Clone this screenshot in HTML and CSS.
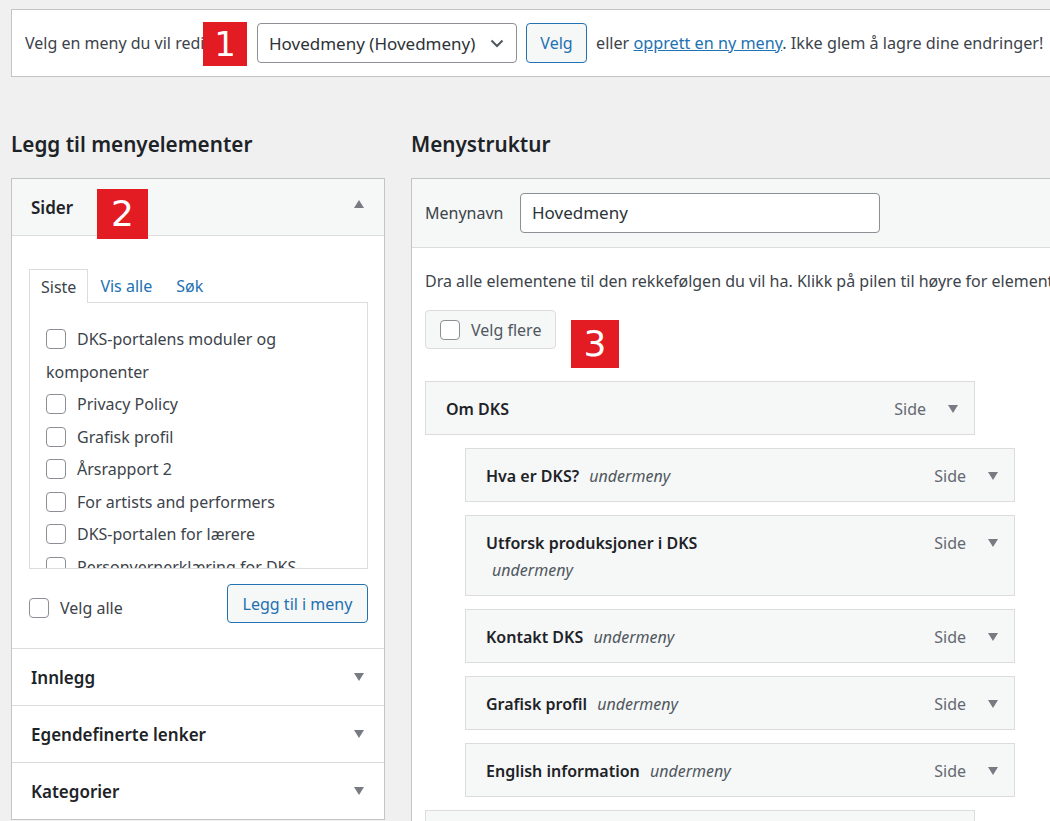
FILE: index.html
```html
<!DOCTYPE html>
<html lang="no">
<head>
<meta charset="utf-8">
<title>Menyer</title>
<link rel="stylesheet" href="styles.css">
</head>
<body>
<div class="page">
  <div class="manage-menus">
    <span class="select-label">Velg en meny du vil redigere:</span>
    <span class="badge badge-1">1</span>
    <div class="select">
      <span>Hovedmeny (Hovedmeny)</span>
      <svg class="chev" width="14" height="9" viewBox="0 0 14 9"><path d="M1.5 1.5 L7 7 L12.5 1.5" fill="none" stroke="#50575e" stroke-width="2"/></svg>
    </div>
    <button class="btn btn-secondary">Velg</button>
    <span class="after">eller <a href="#">opprett en ny meny</a>. Ikke glem å lagre dine endringer!</span>
  </div>

  <div class="columns">
    <div class="col-left">
      <h3 class="col-title">Legg til menyelementer</h3>
      <div class="accordion">
        <div class="acc-head acc-open">
          <span>Sider</span>
          <span class="tri tri-up"></span>
          <span class="badge badge-2">2</span>
        </div>
        <div class="acc-body">
          <div class="tabs">
            <span class="tab active">Siste</span>
            <span class="tab">Vis alle</span>
            <span class="tab">Søk</span>
          </div>
          <div class="tab-panel">
            <ul class="check-list">
              <li><span class="cb"></span>DKS-portalens moduler og komponenter</li>
              <li><span class="cb"></span>Privacy Policy</li>
              <li><span class="cb"></span>Grafisk profil</li>
              <li><span class="cb"></span>Årsrapport 2</li>
              <li><span class="cb"></span>For artists and performers</li>
              <li><span class="cb"></span>DKS-portalen for lærere</li>
              <li><span class="cb"></span>Personvernerklæring for DKS-portalen</li>
            </ul>
          </div>
          <div class="acc-foot">
            <label class="select-all"><span class="cb"></span>Velg alle</label>
            <button class="btn btn-secondary btn-add">Legg til i meny</button>
          </div>
        </div>
        <div class="acc-head"><span>Innlegg</span><span class="tri"></span></div>
        <div class="acc-head"><span>Egendefinerte lenker</span><span class="tri"></span></div>
        <div class="acc-head"><span>Kategorier</span><span class="tri"></span></div>
      </div>
    </div>

    <div class="col-right">
      <h3 class="col-title">Menystruktur</h3>
      <div class="menu-edit">
        <div class="menu-head">
          <label class="name-label">Menynavn</label>
          <div class="name-input">Hovedmeny</div>
        </div>
        <div class="menu-body">
          <p class="instr">Dra alle elementene til den rekkefølgen du vil ha. Klikk på pilen til høyre for elementet for å vise flere innstillinger.</p>
          <div class="bulk-row">
            <button class="btn btn-bulk"><span class="cb"></span>Velg flere</button>
            <span class="badge badge-3">3</span>
          </div>
          <ul class="menu-items">
            <li class="item">
              <div class="item-title"><b>Om DKS</b></div>
              <div class="item-ctrl"><span class="type">Side</span><span class="tri"></span></div>
            </li>
            <li class="item sub">
              <div class="item-title"><b>Hva er DKS?</b> <i>undermeny</i></div>
              <div class="item-ctrl"><span class="type">Side</span><span class="tri"></span></div>
            </li>
            <li class="item sub">
              <div class="item-title"><b>Utforsk produksjoner i DKS</b> <i>undermeny</i></div>
              <div class="item-ctrl"><span class="type">Side</span><span class="tri"></span></div>
            </li>
            <li class="item sub">
              <div class="item-title"><b>Kontakt DKS</b> <i>undermeny</i></div>
              <div class="item-ctrl"><span class="type">Side</span><span class="tri"></span></div>
            </li>
            <li class="item sub">
              <div class="item-title"><b>Grafisk profil</b> <i>undermeny</i></div>
              <div class="item-ctrl"><span class="type">Side</span><span class="tri"></span></div>
            </li>
            <li class="item sub">
              <div class="item-title"><b>English information</b> <i>undermeny</i></div>
              <div class="item-ctrl"><span class="type">Side</span><span class="tri"></span></div>
            </li>
            <li class="item">
              <div class="item-title"><b>Kontakt</b></div>
              <div class="item-ctrl"><span class="type">Side</span><span class="tri"></span></div>
            </li>
          </ul>
        </div>
      </div>
    </div>
  </div>
</div>
</body>
</html>
```

FILE: styles.css
```css
* { box-sizing: border-box; }
html, body { margin: 0; padding: 0; }
body {
  background: #f0f0f1;
  font-family: "Noto Sans", "Open Sans", sans-serif;
  font-size: 16px;
  color: #3c434a;
  width: 1050px;
  height: 821px;
  overflow: hidden;
}
.page { padding: 9px 0 0 11px; width: 1400px; }

/* top bar */
.manage-menus {
  position: relative;
  height: 68px;
  background: #fff;
  border: 1px solid #c3c4c7;
  border-right: none;
  display: flex;
  align-items: center;
  padding-left: 13px;
  white-space: nowrap;
}
.select-label { width: 228px; overflow: hidden; display: inline-block; }
.badge {
  position: absolute;
  background: #e31b23;
  color: #fff;
  font-family: "DejaVu Sans", sans-serif;
  font-weight: 400;
  display: flex;
  align-items: center;
  justify-content: center;
  line-height: 1;
}
.badge-1 { left: 191px; top: 12px; width: 44px; height: 44px; font-size: 34px; }
.badge-2 { left: 85px; top: 10px; width: 51px; height: 50px; font-size: 36px; }
.badge-3 { left: 146px; top: 10px; width: 48px; height: 48px; font-size: 36px; }

.select {
  margin-left: 4px;
  width: 260px;
  height: 40px;
  border: 1px solid #8c8f94;
  border-radius: 4px;
  display: flex;
  align-items: center;
  justify-content: space-between;
  padding: 0 12px 0 11px;
  font-size: 17px;
  color: #2c3338;
}
.chev { display: block; }
.btn {
  font-family: inherit;
  font-size: 16px;
  border-radius: 4px;
  height: 40px;
  cursor: pointer;
}
.btn-secondary {
  background: #f6f7f7;
  border: 1px solid #2271b1;
  color: #2271b1;
  padding: 0 13px;
}
.manage-menus .btn-secondary { margin-left: 9px; width: 61px; }
.after { margin-left: 9px; font-size: 16.2px; }
.after a { color: #2271b1; text-decoration: underline; }

/* columns */
.columns { display: flex; gap: 26px; align-items: flex-start; }
.col-left { width: 374px; flex: none; }
.col-right { width: 700px; flex: none; }
.col-title {
  margin: 0;
  height: 101px;
  padding-top: 50px;
  font-size: 20.7px;
  font-weight: 600;
  line-height: 34px;
  color: #1d2327;
}

/* accordion */
.accordion { background: #fff; border: 1px solid #c3c4c7; }
.acc-head {
  position: relative;
  height: 57px;
  border-top: 1px solid #dcdcde;
  padding: 0 19px 0 19px;
  display: flex;
  align-items: center;
  justify-content: space-between;
  font-size: 17px;
  font-weight: 600;
  color: #1d2327;
}
.acc-head.acc-open {
  border-top: none;
  background: #f6f7f7;
  border-bottom: 1px solid #dcdcde;
}
.tri {
  width: 0; height: 0;
  border-left: 5.5px solid transparent;
  border-right: 5.5px solid transparent;
  border-top: 8px solid #787c82;
}
.tri-up { border-top: none; border-bottom: 8px solid #787c82; margin-top: -6px; }
.acc-head .tri { margin-right: 1px; }

.acc-body { padding: 33px 16px 25px 17px; }
.tabs { display: flex; height: 33px; position: relative; z-index: 1; }
.tab { padding: 0 12px; line-height: 34px; color: #2271b1; }
.tab.active {
  color: #3c434a;
  background: #fff;
  border: 1px solid #dcdcde;
  border-bottom: none;
  padding: 0 11px;
  height: 34px;
}
.tab-panel {
  border: 1px solid #dcdcde;
  height: 267px;
  overflow: hidden;
  padding: 20px 16px 0;
}
.check-list { list-style: none; margin: 0; padding: 0; }
.check-list li { line-height: 32.5px; }
.cb {
  display: inline-block;
  width: 20px;
  height: 20px;
  border: 1px solid #8c8f94;
  border-radius: 4px;
  background: #fff;
  vertical-align: middle;
  margin: -3px 11px 0 0;
}
.acc-foot {
  margin-top: 15px;
  display: flex;
  align-items: center;
  justify-content: space-between;
}
.select-all { display: flex; align-items: center; margin-top: 8px; }
.select-all .cb { margin: 0 11px 0 0; }
.btn-add { height: 39px; width: 141px; padding: 0; }

/* menu structure */
.menu-edit { background: #fff; border: 1px solid #c3c4c7; border-right: none; }
.menu-head {
  height: 69px;
  background: #f6f7f7;
  border-bottom: 1px solid #dcdcde;
  display: flex;
  align-items: center;
  padding-left: 13px;
}
.name-label { width: 95px; }
.name-input {
  width: 360px;
  height: 40px;
  border: 1px solid #8c8f94;
  border-radius: 4px;
  background: #fff;
  padding: 0 11px;
  line-height: 38px;
  font-size: 17px;
  color: #2c3338;
}
.menu-body { padding: 0 13px; position: relative; }
.instr { margin: 21px 0 0; line-height: 24px; white-space: nowrap; }
.bulk-row { position: relative; margin-top: 17px; height: 39px; }
.btn-bulk {
  height: 39px;
  width: 131px;
  background: #f6f7f7;
  border: 1px solid #dcdcde;
  color: #50575e;
  padding: 0 0 0 14px;
  display: flex;
  align-items: center;
}
.btn-bulk .cb { margin: 0 11px 0 0; }

.menu-items { list-style: none; margin: 32px 0 0; padding: 0; }
.item {
  width: 550px;
  margin-bottom: 13px;
  background: #f6f7f7;
  border: 1px solid #dcdcde;
  padding: 14px 16px 11px 20px;
  display: flex;
  justify-content: space-between;
  align-items: flex-start;
  line-height: 27px;
}
.item.sub { margin-left: 40px; }
.item-title { max-width: 280px; color: #1d2327; }
.item-title b { font-weight: 600; }
.item-title i { color: #50575e; margin-left: 6px; }
.item-ctrl { display: flex; align-items: center; height: 27px; }
.item-ctrl .type { color: #646970; margin-right: 22px; }
.item-ctrl .tri { margin-top: -2px; }
```
